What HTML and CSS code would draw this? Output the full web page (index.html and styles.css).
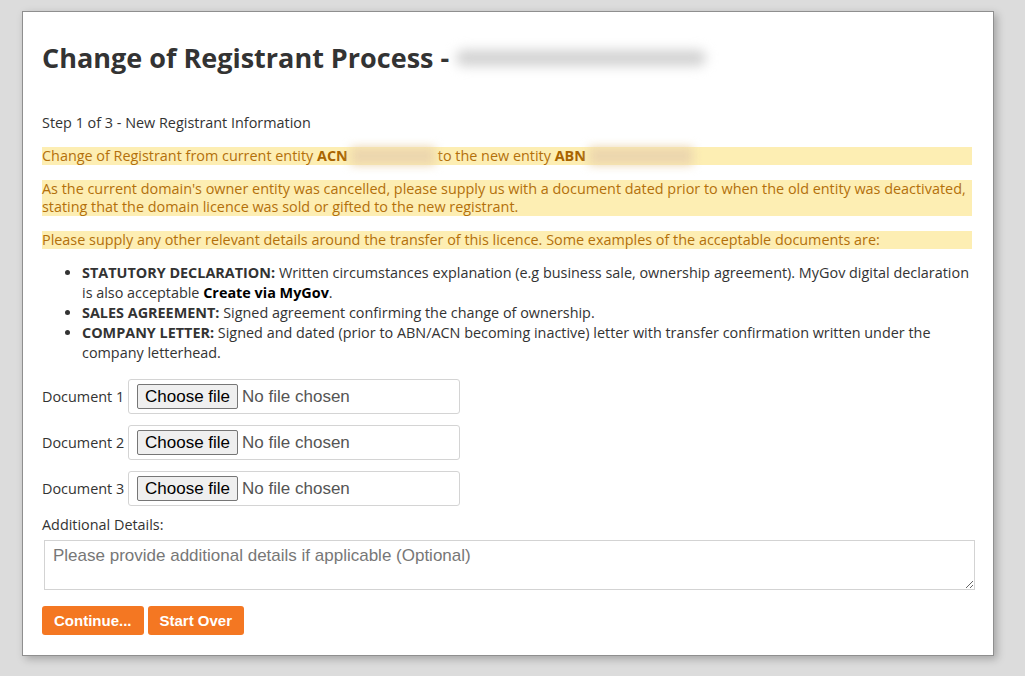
FILE: index.html
```html
<!DOCTYPE html>
<html>
<head>
<meta charset="utf-8">
<link rel="stylesheet" href="styles.css">
</head>
<body>
<div class="card">
  <h1 class="title">Change of Registrant Process - <span class="blur-title"></span></h1>
  <p class="step">Step 1 of 3 - New Registrant Information</p>
  <p class="notice">Change of Registrant from current entity <b>ACN</b><span class="blur-num"></span>to the new entity <b>ABN</b><span class="blur-num blur-abn"></span></p>
  <p class="notice">As the current domain's owner entity was cancelled, please supply us with a document dated prior to when the old entity was deactivated, stating that the domain licence was sold or gifted to the new registrant.</p>
  <p class="notice">Please supply any other relevant details around the transfer of this licence. Some examples of the acceptable documents are:</p>
  <ul class="docs">
    <li><b>STATUTORY DECLARATION:</b> Written circumstances explanation (e.g business sale, ownership agreement). MyGov digital declaration is also acceptable <a class="mygov">Create via MyGov</a>.</li>
    <li><b>SALES AGREEMENT:</b> Signed agreement confirming the change of ownership.</li>
    <li><b>COMPANY LETTER:</b> Signed and dated (prior to ABN/ACN becoming inactive) letter with transfer confirmation written under the company letterhead.</li>
  </ul>
  <div class="doc-row"><span class="doc-label">Document 1</span><label class="file"><span class="file-btn">Choose file</span><span class="file-name">No file chosen</span></label></div>
  <div class="doc-row"><span class="doc-label">Document 2</span><label class="file"><span class="file-btn">Choose file</span><span class="file-name">No file chosen</span></label></div>
  <div class="doc-row"><span class="doc-label">Document 3</span><label class="file"><span class="file-btn">Choose file</span><span class="file-name">No file chosen</span></label></div>
  <label class="add-label">Additional Details:</label>
  <textarea class="details" placeholder="Please provide additional details if applicable (Optional)"></textarea>
  <div class="actions">
    <button class="btn">Continue...</button>
    <button class="btn">Start Over</button>
  </div>
</div>
</body>
</html>
```
FILE: styles.css
```css
html, body {
  margin: 0;
  padding: 0;
}
body {
  background: #dcdcdc;
  font-family: "Open Sans", "DejaVu Sans", sans-serif;
  font-size: 14.4px;
  color: #333;
  padding: 11px 0 0 22px;
  height: 676px;
  box-sizing: border-box;
  overflow: hidden;
}
.card {
  width: 930px;
  background: #fff;
  border: 1px solid #8f8f8f;
  box-shadow: 3px 3px 8px rgba(0, 0, 0, 0.25);
  padding: 20px 21px 20px 19px;
}
.title {
  font-size: 27px;
  font-weight: 700;
  color: #333;
  margin: 10px 0 0 0;
  line-height: 32px;
  height: 32px;
  white-space: nowrap;
}
.blur-title {
  display: inline-block;
  width: 250px;
  height: 16px;
  margin-left: 0;
  background: #d2d2d2;
  border-radius: 8px;
  filter: blur(6px);
  vertical-align: 2px;
}
.step {
  margin: 40px 0 0 0;
  line-height: 18px;
}
.notice {
  background: #fdeeb3;
  color: #b3700b;
  margin: 15px 0 0 0;
  line-height: 18px;
}
.notice b {
  color: #a86400;
}
.blur-num {
  display: inline-block;
  width: 84px;
  height: 18px;
  margin: 0 3px 0 3px;
  background: #ecd6ae;
  filter: blur(5px);
  vertical-align: -4px;
}
.blur-abn {
  width: 104px;
}
.docs {
  margin: 14px 0 0 0;
  padding-left: 40px;
  line-height: 20px;
}
.mygov {
  font-weight: 700;
  color: #000;
}
.doc-row {
  display: flex;
  align-items: center;
  margin-top: 16px;
}
.doc-row + .doc-row {
  margin-top: 11px;
}
.doc-label {
  width: 86px;
}
.file {
  box-sizing: border-box;
  width: 332px;
  height: 35px;
  border: 1px solid #d4d4d4;
  border-radius: 3px;
  padding: 0 8px;
  display: flex;
  align-items: center;
  gap: 4px;
  font-family: "Liberation Sans", Arial, sans-serif;
  font-size: 17px;
  color: #555;
  background: #fff;
}
.file-btn {
  box-sizing: border-box;
  height: 25px;
  line-height: 23px;
  padding: 0 7px;
  background: #efefef;
  border: 1px solid #767676;
  border-radius: 2px;
  color: #000;
}
.file-name {
  color: #555;
}
.add-label {
  display: block;
  margin-top: 10px;
  line-height: 18px;
}
.details {
  display: block;
  box-sizing: border-box;
  width: 931px;
  height: 50px;
  margin: 6px 0 0 2px;
  border: 1px solid #d3d3d3;
  padding: 5px 8px;
  font-family: "Liberation Sans", Arial, sans-serif;
  font-size: 17px;
  color: #333;
  resize: vertical;
}
.details::placeholder {
  color: #777;
}
.actions {
  display: flex;
  gap: 4px;
  margin-top: 16px;
}
.btn {
  background: #f47722;
  color: #fff;
  border: 0;
  border-radius: 3px;
  height: 29px;
  padding: 0 12px;
  font-family: "Liberation Sans", Arial, sans-serif;
  font-weight: 700;
  font-size: 15px;
}
```
